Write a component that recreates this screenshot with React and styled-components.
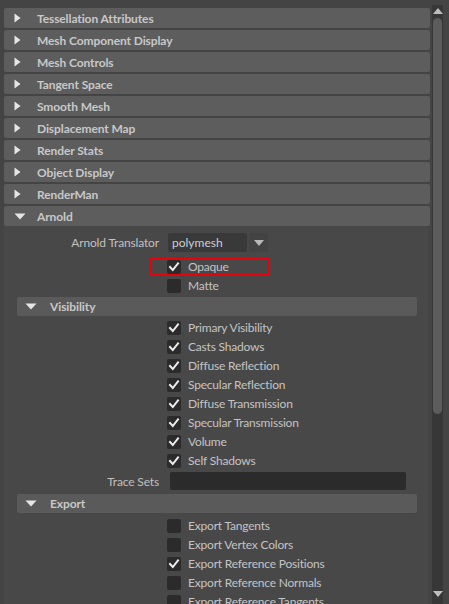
import React from 'react';
import styled, { createGlobalStyle } from 'styled-components';

const GlobalStyle = createGlobalStyle`
  html, body { margin: 0; padding: 0; background: #444444; }
  * { box-sizing: border-box; }
`;

const collapsed = [
  'Tessellation Attributes',
  'Mesh Component Display',
  'Mesh Controls',
  'Tangent Space',
  'Smooth Mesh',
  'Displacement Map',
  'Render Stats',
  'Object Display',
  'RenderMan',
];

const visibility = [
  { label: 'Primary Visibility', on: true },
  { label: 'Casts Shadows', on: true },
  { label: 'Diffuse Reflection', on: true },
  { label: 'Specular Reflection', on: true },
  { label: 'Diffuse Transmission', on: true },
  { label: 'Specular Transmission', on: true },
  { label: 'Volume', on: true },
  { label: 'Self Shadows', on: true },
];

const exportOpts = [
  { label: 'Export Tangents', on: false },
  { label: 'Export Vertex Colors', on: false },
  { label: 'Export Reference Positions', on: true },
  { label: 'Export Reference Normals', on: false },
  { label: 'Export Reference Tangents', on: false },
];

export default function App() {
  return (
    <Window>
      <GlobalStyle />
      <Content>
        {collapsed.map((name) => (
          <FrameHeader key={name}>
            <ArrowSlot><RightArrow /></ArrowSlot>
            <HeaderText>{name}</HeaderText>
          </FrameHeader>
        ))}
        <FrameHeader $open>
          <ArrowSlot><DownArrow /></ArrowSlot>
          <HeaderText>Arnold</HeaderText>
        </FrameHeader>
        <FrameBody>
          <TranslatorRow>
            <Label>Arnold Translator</Label>
            <Dropdown>
              <DropField>polymesh</DropField>
              <DropButton><SmallDown /></DropButton>
            </Dropdown>
          </TranslatorRow>
          <CheckRow label="Opaque" on highlight />
          <CheckRow label="Matte" />

          <SubHeader>
            <SubArrowSlot><DownArrow /></SubArrowSlot>
            <HeaderText>Visibility</HeaderText>
          </SubHeader>
          <RowList>
            {visibility.map((o) => (
              <CheckRow key={o.label} label={o.label} on={o.on} />
            ))}
          </RowList>
          <TraceRow>
            <Label>Trace Sets</Label>
            <TextField />
          </TraceRow>

          <SubHeader $gap={4}>
            <SubArrowSlot><DownArrow /></SubArrowSlot>
            <HeaderText>Export</HeaderText>
          </SubHeader>
          <RowList $gap={3}>
            {exportOpts.map((o) => (
              <CheckRow key={o.label} label={o.label} on={o.on} />
            ))}
          </RowList>
        </FrameBody>
      </Content>
      <ScrollColumn>
        <Track>
          <ScrollBtn><UpTri /></ScrollBtn>
          <Thumb />
          <TrackFill />
          <ScrollBtn $bottom><DownTri /></ScrollBtn>
        </Track>
      </ScrollColumn>
    </Window>
  );
}

function CheckRow({ label, on, highlight }) {
  return (
    <Row>
      <Label />
      <Control>
        {highlight && <Highlight />}
        <Box>
          {on && (
            <svg width="14" height="14" viewBox="0 0 14 14">
              <path d="M3 7 L5.8 10 L11 3.5" fill="none" stroke="#ececec" strokeWidth="2" strokeLinecap="square" />
            </svg>
          )}
        </Box>
        <CheckLabel>{label}</CheckLabel>
      </Control>
    </Row>
  );
}

const RightArrow = () => (
  <svg width="7" height="10" viewBox="0 0 7 10"><path d="M0.5 0.5 L6.5 5 L0.5 9.5 Z" fill="#e6e6e6" /></svg>
);
const DownArrow = () => (
  <svg width="12" height="7" viewBox="0 0 12 7"><path d="M0.5 0.5 L11.5 0.5 L6 6.5 Z" fill="#e6e6e6" /></svg>
);
const SmallDown = () => (
  <svg width="10" height="6" viewBox="0 0 10 6"><path d="M0 0 L10 0 L5 6 Z" fill="#b8b8b8" /></svg>
);
const UpTri = () => (
  <svg width="10" height="6" viewBox="0 0 10 6"><path d="M0 6 L10 6 L5 0 Z" fill="#bdbdbd" /></svg>
);
const DownTri = () => (
  <svg width="10" height="6" viewBox="0 0 10 6"><path d="M0 0 L10 0 L5 6 Z" fill="#bdbdbd" /></svg>
);

const Window = styled.div`
  width: 449px;
  height: 604px;
  overflow: hidden;
  display: flex;
  background: #444444;
  font-family: Lato, "Open Sans", sans-serif;
  font-size: 12px;
`;

const Content = styled.div`
  width: 430px;
  padding: 8px 0 0 4px;
  display: flex;
  flex-direction: column;
`;

const FrameHeader = styled.div`
  height: 20px;
  flex-shrink: 0;
  margin-bottom: ${(p) => (p.$open ? 0 : 2)}px;
  background: #5d5d5d;
  border-radius: 2px;
  display: flex;
  align-items: center;
`;

const ArrowSlot = styled.div`
  width: 33px;
  padding-left: 10px;
  display: flex;
  align-items: center;
`;

const HeaderText = styled.span`
  font-weight: bold;
  color: #c8c8c8;
  white-space: nowrap;
  letter-spacing: -0.1px;
`;

const FrameBody = styled.div`
  flex: 1;
  width: 424px;
  background: #484848;
  padding-top: 7px;
`;

const TranslatorRow = styled.div`
  height: 19px;
  margin-bottom: 5px;
  display: flex;
  align-items: center;
`;

const Label = styled.div`
  width: 155px;
  margin-right: 9px;
  text-align: right;
  color: #c0c0c0;
  white-space: nowrap;
  flex-shrink: 0;
  letter-spacing: -0.15px;
`;

const Dropdown = styled.div`
  display: flex;
  gap: 2px;
  height: 19px;
`;

const DropField = styled.div`
  width: 79px;
  background: #393939;
  border-radius: 2px;
  color: #c9d0d6;
  padding-left: 4px;
  line-height: 19px;
`;

const DropButton = styled.div`
  width: 19px;
  background: #434343;
  border-radius: 2px;
  display: flex;
  align-items: center;
  justify-content: center;
`;

const Row = styled.div`
  height: 19px;
  display: flex;
  align-items: center;
`;

const Control = styled.div`
  position: relative;
  height: 19px;
  display: flex;
  align-items: center;
  margin-left: -1px;
`;

const Highlight = styled.div`
  position: absolute;
  left: -17px;
  top: 0;
  width: 119px;
  height: 19px;
  border: 2px solid #e8000b;
`;

const Box = styled.div`
  width: 14px;
  height: 14px;
  background: #2b2b2b;
  border-radius: 2px;
  display: flex;
  margin-right: 7px;
`;

const CheckLabel = styled.span`
  color: #c4c4c4;
  white-space: nowrap;
  letter-spacing: -0.2px;
`;

const SubHeader = styled.div`
  height: 19px;
  margin: ${(p) => p.$gap || 2}px 11px 0 13px;
  background: #5a5a5a;
  border-radius: 2px;
  display: flex;
  align-items: center;
`;

const SubArrowSlot = styled.div`
  width: 33px;
  padding-left: 8px;
  display: flex;
  align-items: center;
`;

const RowList = styled.div`
  margin-top: ${(p) => p.$gap || 2}px;
  display: flex;
  flex-direction: column;
`;

const TraceRow = styled.div`
  margin-top: 2px;
  height: 18px;
  display: flex;
  align-items: center;
`;

const TextField = styled.div`
  width: 236px;
  height: 18px;
  margin-left: 2px;
  background: #2b2b2b;
  border-radius: 2px;
`;

const ScrollColumn = styled.div`
  flex: 1;
  display: flex;
  padding: 5px 6px 0 2px;
`;

const Track = styled.div`
  width: 11px;
  background: #373737;
  display: flex;
  flex-direction: column;
  align-items: center;
`;

const ScrollBtn = styled.div`
  height: ${(p) => (p.$bottom ? 15 : 12)}px;
  display: flex;
  align-items: ${(p) => (p.$bottom ? 'flex-start' : 'center')};
  justify-content: center;
  padding-top: ${(p) => (p.$bottom ? 2 : 0)}px;
`;

const Thumb = styled.div`
  width: 9px;
  height: 396px;
  margin-top: 1px;
  background: #5c5c5c;
  border-radius: 5px;
`;

const TrackFill = styled.div`
  flex: 1;
`;
